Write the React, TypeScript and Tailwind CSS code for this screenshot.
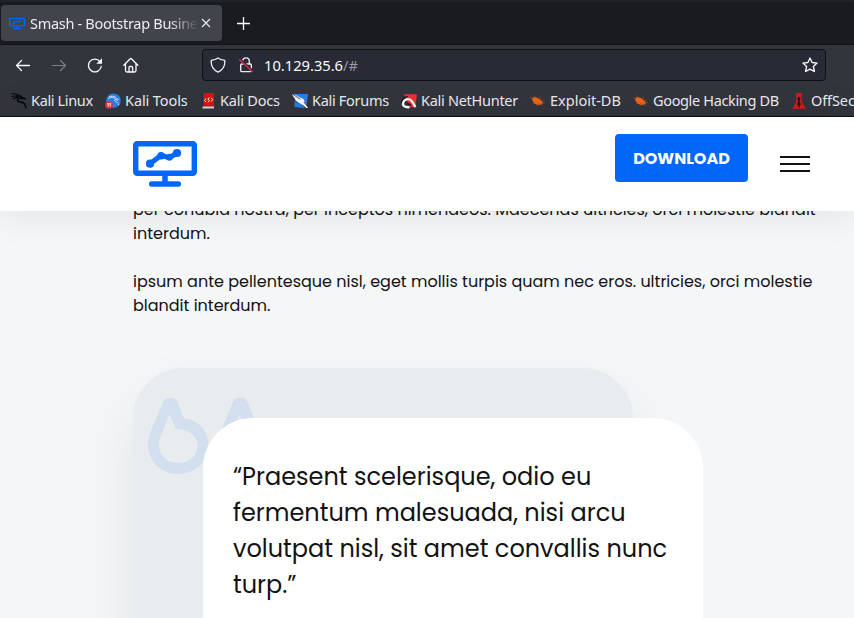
import type { ReactNode } from "react";

const MonitorLogo = ({ className, strokeColor = "#0067f9" }: { className: string; strokeColor?: string }) => (
  <svg viewBox="0 0 64 46" className={className} fill="none" stroke={strokeColor}>
    <rect x="2.700" y="2.700" width="58.600" height="29.600" rx="1.500" strokeWidth="5.400" />
    <path d="M32 34v8" strokeWidth="5.500" />
    <path d="M18.700 43h26.600" strokeWidth="5.500" strokeLinecap="round" />
    <path d="M17 22.800l11.200-8.600 8 2.600 7.800-4.800" strokeWidth="5" strokeLinejoin="round" />
    <g fill={strokeColor} stroke="none">
      <circle cx="17" cy="22.700" r="4.100" />
      <circle cx="28" cy="14.700" r="3.800" />
      <circle cx="36.500" cy="16.200" r="3.400" />
      <circle cx="44" cy="12" r="4.100" />
    </g>
  </svg>
);

const KaliDragon = () => (
  <svg viewBox="0 0 16 16" className="size-4" fill="none" stroke="#08090b" strokeLinecap="round">
    <path d="M.8.8c3-.4 5 0 7 1.400M.9 3.500c2.300-.7 4.500-.6 6.500-.2M2.300 6C3.800 4.800 5 4.500 6.500 4.400" strokeWidth="1.100" />
    <path d="M6 3c2.500-.2 4.500.2 5.700 1.800l2.600.9M11.500 5.500L8.500 5C6.800 5.500 6 7 7 8.200c1.500 1.400 4.800.6 6.200 2.300 1 1.200 1 2.500 1.800 4" strokeWidth="1.700" />
  </svg>
);

const KaliTools = () => (
  <svg viewBox="0 0 16 16" className="size-4">
    <circle cx="8.500" cy="7.700" r="7.300" fill="#2f7fe8" />
    <path d="M3 5.500c3-1.600 5.500-1.500 7.800.4l2.800.3-1 .9-2.600-.5c-1.500 1 .7 2 2 2.700 1 .6 1.500 1.500 1.600 2.800M4 3.800c2.500-1 5-.6 7 .7" fill="none" stroke="#c5dcfa" strokeWidth="1" />
    <circle cx="4" cy="12" r="3.800" fill="#e8343a" />
    <path d="M2 10.700h4.200M3.200 10.700v3M5.200 10.700v3" stroke="#fff" strokeWidth=".9" />
  </svg>
);

const KaliDocs = () => (
  <svg viewBox="0 0 16 16" className="size-4">
    <path d="M2 .5h1.500V15H2z" fill="#182b5e" />
    <path d="M3.300 0H14v13.500H3.300z" fill="#dc1117" />
    <path d="M2.500 13.500H14V15.500H2.500z" fill="#d9dadd" />
    <path d="M6 5.500L4.600 7.500 6 9M11.200 4.800L12.700 6.700 11.200 8.500M9.500 4.500L7.800 6.200 9.600 7.500 8 9.300" fill="none" stroke="#fff" strokeWidth=".9" />
  </svg>
);

const KaliForums = () => (
  <svg viewBox="0 0 16 16" className="size-4">
    <path d="M3 1H16l-1.500 12L12 15 2.500 14z" fill="#287fe9" />
    <path d="M0 1.500h3l5 3 3.500 1.500 1.200 3L16 15h-2.500L9 10.800 5 9.300 3 6z" fill="#f4f6f8" />
    <path d="M.8 1.200l7.400 5M3.500 8.500l3 1.300M12 9l3.500 4.500M10 12l4 3" stroke="#20242c" strokeWidth=".8" fill="none" />
  </svg>
);

const NetHunter = () => (
  <svg viewBox="0 0 16 16" className="size-4">
    <path d="M3 1.200H16l-1.800 13H9z" fill="#ee3038" />
    <path d="M1 11.500C0 6.500 3 3.600 7 3.600" fill="none" stroke="#17191e" strokeWidth="1.200" />
    <path d="M8.500 14.200c-5 .4-7.300-1.500-6.300-4.700 1-3.200 5.300-4.500 8-2 2 1.800 2.300 4 4.300 6.500" fill="none" stroke="#fff" strokeWidth="2.300" />
    <path d="M6.200 11.500c1-1.400 2.500-.8 3.800 1" fill="none" stroke="#17191e" strokeWidth="1.400" />
  </svg>
);

const ExploitBug = () => (
  <svg viewBox="0 0 16 16" className="size-4" stroke="#b8541f">
    <path d="M2 5.500c1.800-2 4.500-1.500 6.800.2 2 1.400 3.500 2.400 4 4.500-1 1.500-4.500 2.200-7 1C3.500 10 2.200 8 2 5.500z" fill="#ef6518" stroke="none" />
    <path d="M.3 4.500l3 1M3 2.500l2 2M10 3.500v3M13.500 7.500L11 8.500M15 9.500l-3-.3M3 11l2-1.500M7 13l1-3M12.500 13L10 10" strokeWidth=".7" fill="none" />
  </svg>
);

const OffSec = () => (
  <svg viewBox="0 0 16 16" className="size-4">
    <path d="M5.200 0h5.400v7.500l.8 2.500 3.600 5.800H1.200L4.600 10l.6-2.500z" fill="#dc171d" />
    <path d="M7.900 4a1.400 1.400 0 011.300 1.900l-.6 2 .5 2.100 1.200 1.300-1.600.8v2.200H7.200v-2.200l-1.600-.8L6.800 10l.4-2.100-.7-2A1.400 1.400 0 017.900 4z" fill="#21151b" />
  </svg>
);

const bookmarks: { label: string; icon: ReactNode; box: string }[] = [
  { label: "Kali Linux", icon: <KaliDragon />, box: "w-[94px] tracking-[-0.35px]" },
  { label: "Kali Tools", icon: <KaliTools />, box: "w-[95px] tracking-[-0.1px]" },
  { label: "Kali Docs", icon: <KaliDocs />, box: "w-[92px] tracking-[-0.2px]" },
  { label: "Kali Forums", icon: <KaliForums />, box: "w-[109px] tracking-[-0.3px]" },
  { label: "Kali NetHunter", icon: <NetHunter />, box: "w-[129px] tracking-[-0.28px]" },
  { label: "Exploit-DB", icon: <ExploitBug />, box: "w-[103px]" },
  { label: "Google Hacking DB", icon: <ExploitBug />, box: "w-[158px] tracking-[-0.35px]" },
  { label: "OffSec", icon: <OffSec />, box: "w-[80px] tracking-[-0.1px]" },
];

function BrowserChrome() {
  return (
    <div className="h-[117px] shrink-0 bg-[#33353d] text-[#ececf0] font-['Noto_Sans',sans-serif]">
      <div className="flex h-[45px] items-start border-t-2 border-b border-t-[#1e252d] border-b-[#111216] bg-[#1a1b1f] pl-px pt-[3px]">
        <div className="flex h-9 w-[221px] items-center rounded bg-[#42444b] pl-2">
          <MonitorLogo className="h-[13px] w-4" />
          <div className="ml-[5px] mt-px w-[169px] overflow-hidden whitespace-nowrap text-[14.500px] tracking-[-0.3px] [mask-image:linear-gradient(to_right,#000_82%,transparent)]">
            Smash - Bootstrap Busine
          </div>
          <svg viewBox="0 0 10 10" className="ml-[2px] size-2.5 shrink-0" stroke="#e8e8ec" strokeWidth="1.200">
            <path d="M1 1l8 8M9 1L1 9" />
          </svg>
        </div>
        <svg viewBox="0 0 12 12" className="ml-[15px] mt-3 size-[13px]" stroke="#fbfbfe" strokeWidth="1.200">
          <path d="M6 0v12M0 6h12" />
        </svg>
      </div>

      <div className="flex h-10 items-center pl-[15px]">
        <svg viewBox="0 0 16 16" className="size-4" fill="none" stroke="#fbfbfe" strokeWidth="1.300" strokeLinecap="round" strokeLinejoin="round">
          <path d="M14.500 8.500h-13M6.500 3.500l-5 5 5 5" />
        </svg>
        <svg viewBox="0 0 16 16" className="ml-5 size-4" fill="none" stroke="#7d7f86" strokeWidth="1.200" strokeLinecap="round" strokeLinejoin="round">
          <path d="M1.500 8.500h13M9.500 3.500l5 5-5 5" />
        </svg>
        <svg viewBox="0 0 16 16" className="ml-5 size-4" fill="none" stroke="#fbfbfe" strokeWidth="1.300" strokeLinecap="round">
          <path d="M13 4.600A6.400 6.400 0 1014.200 9.500" />
          <path d="M15 1.200v5.600H9.400z" fill="#fbfbfe" stroke="none" />
        </svg>
        <svg viewBox="0 0 16 16" className="ml-5 size-4" fill="none" stroke="#fbfbfe" strokeWidth="1.300" strokeLinejoin="round" strokeLinecap="round">
          <path d="M.8 8.300l6.400-6.600q.6-.6 1.200 0l6.400 6.600M2.500 7.500v6q0 1.500 1.500 1.500h7.500q1.500 0 1.500-1.500v-6M6 15v-4.500q0-1 1-1h1.600q1 0 1 1V15" />
        </svg>
        <div className="ml-[63px] flex h-8 w-[624px] items-center rounded border border-[#0e0f13] bg-[#282a35] pl-[7px] pr-[7px]">
          <svg viewBox="0 0 16 16" className="size-4" fill="none" stroke="#f1f1f5" strokeWidth="1.300" strokeLinejoin="round">
            <path d="M8 .9c2 1.500 4 2 6 2.200q.9.1.9 1c0 5-1.800 9-6.900 11C3 13 1.100 9 1.100 4.100q0-.9.9-1C4 2.900 6 2.400 8 .9z" />
          </svg>
          <svg viewBox="0 0 16 16" className="ml-3 size-4" fill="none" stroke="#e9e9ee" strokeWidth="1.400">
            <path d="M4.700 7V4.200a3.300 3.300 0 016.600 0V7" />
            <rect x="2.700" y="7" width="10.600" height="7.600" rx="1" />
            <path d="M2 2.500l13 12" stroke="#282a35" strokeWidth="2.600" />
            <path d="M1.200 2.200l13.500 12.800" stroke="#e22850" strokeWidth="1.500" />
          </svg>
          <div className="ml-[10px] text-[14.700px] leading-5 text-[#fbfbfe]">
            10.129.35.6<span className="text-[#9899a3]">/#</span>
          </div>
          <svg viewBox="0 0 16 16" className="ml-auto size-4" fill="none" stroke="#fbfbfe" strokeWidth="1.300" strokeLinejoin="round">
            <path d="M8 1l2.100 4.500 5 .6-3.700 3.400 1 5L8 12.100l-4.400 2.400 1-5L.9 6.100l5-.6z" />
          </svg>
        </div>
      </div>

      <div className="flex h-8 items-center overflow-hidden border-b border-[#0c0d10] pl-[11px]">
        {bookmarks.map((b) => (
          <div key={b.label} className={`flex shrink-0 items-center gap-1 whitespace-nowrap text-[14.500px] ${b.box}`}>
            {b.icon}
            {b.label}
          </div>
        ))}
      </div>
    </div>
  );
}

function SiteHeader() {
  return (
    <header className="relative z-10 flex h-[94px] shrink-0 items-center bg-white pl-[133px] shadow-[0_0_40px_rgba(0,0,0,0.10)]">
      <MonitorLogo className="h-[46px] w-16" />
      <button className="mb-3 ml-[418px] flex h-12 w-[133px] items-center justify-center rounded bg-[#0067f9] pt-px text-base font-bold text-white">
        DOWNLOAD
      </button>
      <div className="ml-8 flex w-[30px] flex-col gap-[5px]">
        <span className="h-0.5 bg-[#121212]" />
        <span className="h-0.5 bg-[#121212]" />
        <span className="h-0.5 bg-[#121212]" />
      </div>
    </header>
  );
}

const Drop = ({ className }: { className: string }) => (
  <svg viewBox="148 398 61 76" className={className} fill="#d2dfef" fillRule="evenodd">
    <path d="M163 402Q165 398 168.500 398H172Q175.500 398 177.500 402L184 418.500C199 420 208.500 431 208.500 445C208.500 462 195 474 178 474C161 474 148 461 148 445C148 438 150 433 153 426ZM169.500 414.500L161.500 434C160 437 159 440 159 445C159 455 167 463 178 463C189 463 197.500 456 197.500 446C197.500 435 188 429 176 429Z" />
  </svg>
);

export default function App() {
  return (
    <div className="flex h-[618px] w-[854px] flex-col overflow-hidden bg-[#f4f6f8] text-[#121212] font-['Poppins','Inter',sans-serif]">
      <BrowserChrome />
      <SiteHeader />
      <main className="-mt-[13px] pl-[133px]">
        <div className="whitespace-nowrap text-base leading-6">
          <p>per conubia nostra, per inceptos himenaeos. Maecenas ultricies, orci molestie blandit</p>
          <p>interdum.</p>
          <p className="mt-6">ipsum ante pellentesque nisl, eget mollis turpis quam nec eros. ultricies, orci molestie</p>
          <p>blandit interdum.</p>
        </div>
        <section className="mt-[50px] h-[500px] w-[500px] rounded-[50px] bg-[#e8ecef] shadow-[0_30px_60px_rgba(0,0,0,0.08)]">
          <div className="flex h-[50px] gap-[9px] pl-[15px] pt-[30px]">
            <Drop className="h-[76px] w-[61px] shrink-0" />
            <Drop className="h-[76px] w-[61px] shrink-0" />
          </div>
          <blockquote className="relative ml-[70px] h-[500px] w-[500px] whitespace-nowrap rounded-[50px] bg-white pl-[30px] pt-[41px] text-2xl leading-9">
            <p>“Praesent scelerisque, odio eu</p>
            <p>fermentum malesuada, nisi arcu</p>
            <p>volutpat nisl, sit amet convallis nunc</p>
            <p>turp.”</p>
          </blockquote>
        </section>
      </main>
    </div>
  );
}
